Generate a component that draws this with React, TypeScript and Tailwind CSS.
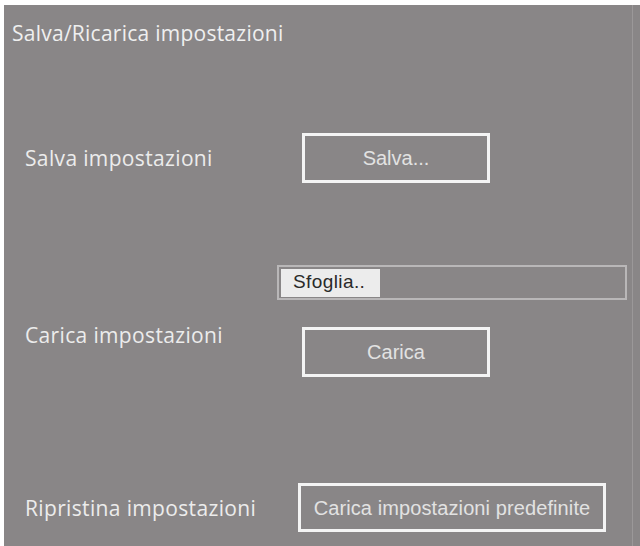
import React from "react";

const labelCls =
  "text-[21px] leading-7 text-[#ececec] font-['Open_Sans',sans-serif] tracking-[0.35px]";
const btnCls =
  "flex items-center justify-center border-[3px] border-[#f4f4f4] text-[20px] text-[#e2e2e2] font-['Liberation_Sans',Arial,sans-serif]";

export default function App() {
  return (
    <div className="w-[640px] h-[546px] bg-white pl-[4px] pt-[5px]">
      <div className="flex h-[541px] w-[636px] bg-[#898687]">
        <div className="flex w-[629px] flex-col border-r border-[#9b9899]">
          <h1 className="ml-[8px] mt-[14px] h-[28px] text-[21px] leading-7 text-[#efefef] font-['Open_Sans',sans-serif] tracking-[0.25px]">
            Salva/Ricarica impostazioni
          </h1>

          {/* Save */}
          <div className="mt-[86px] flex h-[50px] items-center">
            <span className={`${labelCls} ml-[21px] w-[277px]`}>Salva impostazioni</span>
            <button className={`${btnCls} h-[50px] w-[188px]`}>Salva...</button>
          </div>

          {/* Browse */}
          <div className="ml-[273px] mt-[82px] flex h-[35px] w-[350px] items-center border-2 border-[#b9b7b8] px-[2px]">
            <span className="flex h-[28px] w-[99px] items-center bg-[#ececec] pl-[12px] text-[19px] text-[#2a2a2a] font-['Liberation_Sans',Arial,sans-serif] tracking-[0.4px]">
              Sfoglia..
            </span>
          </div>

          {/* Load */}
          <div className="mt-[21px] flex items-start">
            <span className={`${labelCls} ml-[21px] w-[277px]`}>Carica impostazioni</span>
            <button className={`${btnCls} mt-[6px] h-[50px] w-[188px]`}>Carica</button>
          </div>

          {/* Defaults */}
          <div className="mt-[106px] flex h-[49px] items-center">
            <span className={`${labelCls} ml-[21px] w-[273px]`}>Ripristina impostazioni</span>
            <button className={`${btnCls} h-[49px] w-[308px] tracking-[0.1px]`}>
              Carica impostazioni predefinite
            </button>
          </div>
        </div>
      </div>
    </div>
  );
}
